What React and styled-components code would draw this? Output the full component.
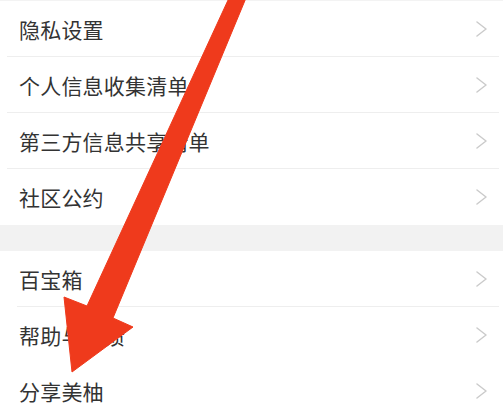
import React from "react";
import styled, { createGlobalStyle } from "styled-components";

const Global = createGlobalStyle`
  html, body { margin: 0; padding: 0; background: #ffffff; }
  body { font-family: "Noto Sans CJK SC", "Noto Sans", sans-serif; }
`;

const Page = styled.div`
  position: relative;
  width: 503px;
  height: 420px;
  overflow: hidden;
  background: #ffffff;
`;

const Section = styled.div`
  display: flex;
  flex-direction: column;
  background: #ffffff;
  border-top: ${(p) => (p.$topLine ? "1px solid #f3f3f3" : "none")};
`;

const Gap = styled.div`
  height: 26px;
  background: #f2f2f2;
`;

const Row = styled.div`
  position: relative;
  display: flex;
  align-items: center;
  justify-content: space-between;
  height: 56px;
  padding: 0 16px 0 19px;
  box-sizing: border-box;
  &::after {
    content: "";
    display: ${(p) => (p.$line ? "block" : "none")};
    position: absolute;
    left: ${(p) => p.$inset}px;
    right: 4px;
    bottom: 0;
    height: 1px;
    background: #eeeeee;
  }
`;

const Label = styled.span`
  font-size: 21px;
  color: #333333;
  line-height: 1;
  letter-spacing: 0.2px;
`;

const Arrow = styled.svg`
  position: absolute;
  left: 0;
  top: 0;
  pointer-events: none;
`;

const Chevron = () => (
  <svg width="12" height="16" viewBox="0 0 12 16">
    <polyline
      points="2,1 11,8 2,15"
      fill="none"
      stroke="#cbcbcb"
      strokeWidth="1.5"
      strokeLinecap="round"
      strokeLinejoin="round"
    />
  </svg>
);

const first = ["隐私设置", "个人信息收集清单", "第三方信息共享清单", "社区公约"];
const second = ["百宝箱", "帮助与反馈", "分享美柚"];

export default function App() {
  return (
    <>
      <Global />
      <Page>
        <Section $topLine>
          {first.map((t, i) => (
            <Row key={t} $inset={7} $line={i < first.length - 1}>
              <Label>{t}</Label>
              <Chevron />
            </Row>
          ))}
        </Section>
        <Gap />
        <Section>
          {second.map((t, i) => (
            <Row key={t} $inset={17} $line={i === 0}>
              <Label>{t}</Label>
              <Chevron />
            </Row>
          ))}
        </Section>
        <Arrow width="503" height="420" viewBox="0 0 503 420">
          <polygon
            points="229,-2 246,-2 113,318 133,327 72,372 64,297 87,306"
            fill="#ef3a1c"
            stroke="#ef3a1c"
            strokeWidth="1"
            strokeLinejoin="round"
          />
        </Arrow>
      </Page>
    </>
  );
}
